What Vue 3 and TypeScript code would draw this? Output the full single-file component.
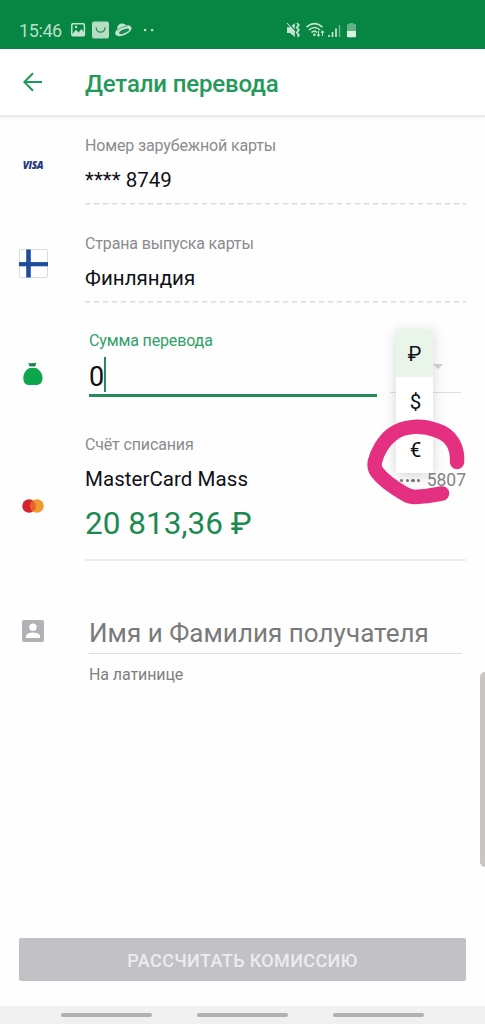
<script setup lang="ts">
import { ref } from 'vue'

interface Currency {
  code: string
  sign: string
}

const currencies: Currency[] = [
  { code: 'RUB', sign: '₽' },
  { code: 'USD', sign: '$' },
  { code: 'EUR', sign: '€' },
]
const selected = ref('RUB')
</script>

<template>
  <div class="screen">
    <div class="status">
      <span class="clock">15:46</span>
      <svg class="status-left" width="84" height="18" viewBox="0 0 84 18">
        <rect x="0.8" y="2.8" width="12.6" height="12" rx="1.2" fill="none" stroke="#c3e5cf" stroke-width="1.5" />
        <path d="M1 13.5 L5 8.8 L7.5 11.4 L10.3 8 L13.4 11.5 V15 H1Z" fill="#c3e5cf" />
        <circle cx="5" cy="6" r="1.2" fill="#c3e5cf" />
        <rect x="21" y="0.5" width="17" height="17" rx="2" fill="#b5ddc4" />
        <path d="M25.2 7 C26 12.500 33.300 12.500 34 7" fill="none" stroke="#2c8c52" stroke-width="1.300" stroke-linecap="round" />
        <g transform="rotate(-24 52 9)">
          <ellipse cx="52" cy="9.800" rx="8.800" ry="4.500" fill="#c3e5cf" />
          <path d="M47.300 6.500 C47.500 0.800 56 0.800 56.800 6.500 Q52 4.800 47.300 6.500Z" fill="#c3e5cf" />
          <path d="M46.500 7.300 Q52 4.800 57.500 7.300" fill="none" stroke="#3f9f69" stroke-width="0.800" />
          <ellipse cx="52.500" cy="10.700" rx="5.400" ry="1.900" fill="#178c4e" />
        </g>
        <rect x="73" y="8" width="2.200" height="2.200" fill="#c3e5cf" />
        <rect x="80" y="8" width="2.200" height="2.200" fill="#c3e5cf" />
      </svg>
      <svg class="status-right" width="74" height="18" viewBox="0 0 74 18">
        <path d="M2 6.200 H5 L9.800 2 V16 L5 12 H2Z" fill="#c3e5cf" />
        <path d="M3 1.500 L11 10.500" stroke="#078542" stroke-width="1.200" />
        <path d="M2 2 L10 11" stroke="#c3e5cf" stroke-width="1.100" />
        <path d="M12 2 L13.800 4.200 L11.800 6.500 L13.800 9 L11.800 11.500 L13.800 14 L12.800 15.800" fill="none" stroke="#c3e5cf" stroke-width="1.800" />
        <path d="M21.500 6.200 Q29.500 -1 37.500 6.200 M24 9 Q29.500 4 35 9 M26.400 11.500 Q29.500 8.800 32 11.500" fill="none" stroke="#c3e5cf" stroke-width="1.600" />
        <circle cx="29.300" cy="13.800" r="1.300" fill="#c3e5cf" />
        <path d="M33.500 10 V15 M32 13.500 L33.500 15.200 L35 13.500 M37.500 15 V10 M36 11.700 L37.500 10 L39 11.700" fill="none" stroke="#c3e5cf" stroke-width="1.100" />
        <path d="M44 14 V16 M47.500 11 V16 M51 7.500 V16" stroke="#c3e5cf" stroke-width="1.700" />
        <path d="M54.500 4 V16" stroke="#6bb58a" stroke-width="1.500" />
        <path d="M62 10 V4 Q62 3 63 3 H64.500 V2 H68.500 V3 H70 Q71 3 71 4 V10Z" fill="#62b184" />
        <path d="M62 10 H71 V15.200 Q71 16.200 70 16.200 H63 Q62 16.200 62 15.200Z" fill="#d9f0e1" />
      </svg>
    </div>

    <header class="bar">
      <svg class="back" width="20" height="20" viewBox="0 0 20 20">
        <path d="M19 10 H1.500 M10 1.300 L1.300 10 L10 18.700" fill="none" stroke="#1a9a53" stroke-width="2" />
      </svg>
      <h1>Детали перевода</h1>
    </header>

    <main class="form">
      <section class="row card-row">
        <div class="icon visa"><span>VISA</span></div>
        <div class="body">
          <div class="label l-number">Номер зарубежной карты</div>
          <div class="value v-number">**** 8749</div>
          <svg class="dash" height="2"><line x1="0" y1="0.750" x2="381" y2="0.750" /></svg>
        </div>
      </section>

      <section class="row country-row">
        <div class="icon">
          <svg width="29" height="29" viewBox="0 0 29 29">
            <rect x="0.500" y="0.500" width="28" height="28" rx="1.500" fill="#fff" stroke="#d8dbe3" />
            <path d="M0 15.200 H29" stroke="#1d4d9e" stroke-width="4.200" />
            <path d="M9.500 0.500 V28.500" stroke="#1d4d9e" stroke-width="4.600" />
          </svg>
        </div>
        <div class="body">
          <div class="label l-country">Страна выпуска карты</div>
          <div class="value v-country">Финляндия</div>
          <svg class="dash" height="2"><line x1="0" y1="0.750" x2="381" y2="0.750" /></svg>
        </div>
      </section>

      <section class="row sum-row">
        <div class="icon bag">
          <svg width="20" height="24" viewBox="0 0 20 24">
            <path d="M5.300 0.800 Q7 1.800 9.500 0.900 Q11 1.800 13.300 0.600 L12.200 4.600 H6.600Z" fill="#148947" />
            <path d="M6.500 6 H13 C17 8 19.500 12 19.500 16 C19.500 21 16.500 23 13.500 23 H6 C3 23 0.300 21 0.300 16 C0.300 12 2.500 8 6.500 6Z" fill="#0da64d" />
          </svg>
        </div>
        <div class="sum">
          <div class="label l-sum">Сумма перевода</div>
          <div class="entry"><span>0</span><i class="caret"></i></div>
        </div>
        <div class="unit">
          <svg class="arrow" width="10" height="5" viewBox="0 0 10 5"><path d="M0 0 H10 L5 5Z" fill="#d2d2d2" /></svg>
          <ul class="menu">
            <li v-for="c in currencies" :key="c.code" :class="{ on: c.code === selected }" @click="selected = c.code">{{ c.sign }}</li>
          </ul>
        </div>
      </section>

      <section class="row account-row">
        <div class="icon mc">
          <svg width="22" height="14" viewBox="0 0 22 14">
            <circle cx="7" cy="7" r="6.800" fill="#d2232e" />
            <circle cx="15" cy="7" r="6.800" fill="#ee9a30" />
            <path d="M11 1.500 A6.800 6.800 0 0 1 11 12.500 A6.800 6.800 0 0 1 11 1.500Z" fill="#e8602a" />
          </svg>
        </div>
        <div class="body">
          <div class="label l-account">Счёт списания</div>
          <div class="account">
            <span class="value v-account">MasterCard Mass</span>
            <span class="tail"><i v-for="n in 4" :key="n" class="dot"></i><span class="digits">5807</span></span>
          </div>
          <div class="amount">20 813,36 ₽</div>
        </div>
      </section>

      <section class="row name-row">
        <div class="icon person">
          <svg width="22" height="22" viewBox="0 0 22 22">
            <rect width="22" height="22" rx="2" fill="#b2b1b6" />
            <circle cx="11" cy="7.300" r="3.700" fill="#fff" />
            <path d="M4 18 V16.500 C4 13.500 8.500 12.600 11 12.600 C13.500 12.600 18 13.500 18 16.500 V18Z" fill="#fff" />
          </svg>
        </div>
        <div class="name">
          <div class="placeholder">Имя и Фамилия получателя</div>
          <div class="hint">На латинице</div>
        </div>
      </section>
    </main>

    <button class="submit">РАССЧИТАТЬ КОМИССИЮ</button>

    <nav class="gestures"><i></i><i></i><i></i></nav>

    <div class="edge"></div>
    <svg class="marker" width="104" height="92" viewBox="0 0 104 92">
      <path d="M91 45 C92 30 85 18 71 13.500 C57 8 38 8 26 17.500 C17 24.500 11 36 8.800 45 C8.300 48 8.500 52 11 55 C16 62 27 70 38 76.500 C42 79 45 80 49 80 L61 79 L76 76.500" fill="none" stroke="#e52f80" stroke-width="14.500" stroke-linecap="round" stroke-linejoin="round" />
    </svg>
  </div>
</template>

<style>
body {
  margin: 0;
}
</style>

<style scoped>
.screen {
  position: relative;
  width: 485px;
  height: 1024px;
  overflow: hidden;
  display: flex;
  flex-direction: column;
  background: #fefefe;
  font-family: Roboto, "Noto Sans", sans-serif;
  color: #101018;
}
.status {
  height: 49px;
  flex: none;
  box-sizing: border-box;
  padding: 12px 0 0 19px;
  background: #078542;
  display: flex;
  align-items: center;
}
.clock {
  width: 52px;
  font-size: 18px;
  letter-spacing: -0.4px;
  line-height: 24px;
  color: #b9dfc7;
  white-space: nowrap;
}
.status-left {
  margin-top: -1px;
}
.status-right {
  margin-top: -1px;
  margin-left: 130px;
}
.bar {
  height: 66px;
  flex: none;
  display: flex;
  align-items: center;
  padding-left: 23px;
  background: #fff;
  border-bottom: 2px solid #e9e9e9;
  box-shadow: 0 1px 3px rgba(0, 0, 0, 0.06);
}
h1 {
  margin: 4px 0 0 42px;
  font-size: 24px;
  letter-spacing: -0.16px;
  line-height: 30px;
  font-weight: 500;
  color: #24995a;
  white-space: nowrap;
}
.form {
  display: flex;
  flex-direction: column;
}
.row {
  display: flex;
}
.icon {
  width: 66px;
  flex: none;
  box-sizing: border-box;
  display: flex;
  justify-content: center;
  margin-right: 19px;
}
.body {
  width: 381px;
}
.label {
  font-size: 16px;
  letter-spacing: -0.14px;
  line-height: 20px;
  color: #8b8b8d;
  white-space: nowrap;
}
.value {
  font-size: 20.5px;
  letter-spacing: 0.05px;
  line-height: 26px;
  white-space: nowrap;
}
.card-row {
  padding-top: 19px;
  height: 68px;
}
.visa {
  padding-top: 19px;
  font: italic 800 10px/20px "Open Sans", sans-serif;
  letter-spacing: -0.35px;
  color: #23357f;
}
.v-number,
.v-country {
  margin-top: 11px;
}
.dash {
  display: block;
  width: 381px;
  margin-top: 10px;
}
.dash line {
  stroke: #dcdcdc;
  stroke-width: 1.5;
  stroke-dasharray: 5.2 3.8;
}
.country-row {
  padding-top: 30px;
  height: 68px;
}
.country-row .icon {
  padding-top: 15px;
}
.sum-row {
  padding-top: 28px;
  height: 67px;
}
.bag {
  padding-top: 32px;
}
.sum {
  width: 288px;
  margin-left: 4px;
}
.l-sum {
  position: relative;
  top: 1px;
  color: #2ea166;
}
.entry {
  display: flex;
  height: 44px;
  border-bottom: 3px solid #278a57;
}
.entry span {
  font-size: 27px;
  line-height: 54px;
}
.caret {
  width: 2px;
  height: 35px;
  margin-top: 7px;
  background: #278a57;
}
.unit {
  position: relative;
  width: 71px;
  height: 62px;
  margin-left: 13px;
  border-bottom: 1px solid #dfdfdf;
}
.arrow {
  position: absolute;
  left: 43px;
  top: 34px;
}
.menu {
  position: absolute;
  left: 6px;
  top: -1px;
  width: 37px;
  margin: 0;
  padding: 0;
  list-style: none;
  background: #fff;
  box-shadow: 0 3px 14px rgba(0, 0, 0, 0.16);
}
.menu li {
  height: 48px;
  padding-left: 2px;
  font-size: 20.5px;
  line-height: 50px;
  text-align: center;
}
.menu .on {
  padding-left: 0;
  background: #e9f5e9;
}
.account-row {
  padding-top: 38px;
  height: 125px;
}
.mc {
  padding-top: 64px;
}
.account-row .body {
  height: 124px;
  border-bottom: 2px solid #ebebeb;
}
.account {
  display: flex;
  justify-content: space-between;
  margin-top: 11px;
}
.tail {
  display: flex;
  align-items: center;
  height: 28px;
  font-size: 17.5px;
  line-height: 28px;
  color: #858587;
}
.dot {
  width: 3.5px;
  height: 3.5px;
  margin: 1px 2.2px 0 0;
  border-radius: 50%;
  background: #77777a;
}
.digits {
  margin: 0 0 0 4px;
}
.amount {
  margin-top: 9px;
  font-size: 31.5px;
  line-height: 42px;
  color: #1c8a50;
  white-space: nowrap;
}
.name-row {
  padding-top: 57px;
}
.person {
  padding-top: 3px;
}
.name {
  width: 373px;
  margin-left: 4px;
}
.placeholder {
  height: 36px;
  font-size: 26px;
  letter-spacing: 0.04px;
  line-height: 32px;
  color: #79797b;
  white-space: nowrap;
  border-bottom: 1px solid #dedede;
}
.hint {
  margin-top: 11px;
  font-size: 16px;
  letter-spacing: -0.1px;
  line-height: 20px;
  color: #808082;
}
.submit {
  flex: none;
  height: 43px;
  margin: auto 19px 25px;
  border: 0;
  padding: 2px 0 0;
  border-radius: 2px;
  background: #c2c1c6;
  color: #ececf0;
  font: 500 18px/24px Roboto, sans-serif;
  letter-spacing: 0.38px;
}
.gestures {
  flex: none;
  height: 18px;
  box-sizing: border-box;
  padding: 7px 61px 0;
  display: flex;
  justify-content: space-between;
  background: #f0f0f0;
}
.gestures i {
  width: 91px;
  height: 4px;
  border-radius: 2px;
  background: #b0b0b0;
}
.edge {
  position: absolute;
  right: 0;
  top: 672px;
  width: 5px;
  height: 195px;
  border-radius: 5px 0 0 5px;
  background: #c9c5c3;
}
.marker {
  position: absolute;
  left: 366px;
  top: 417px;
}
</style>
